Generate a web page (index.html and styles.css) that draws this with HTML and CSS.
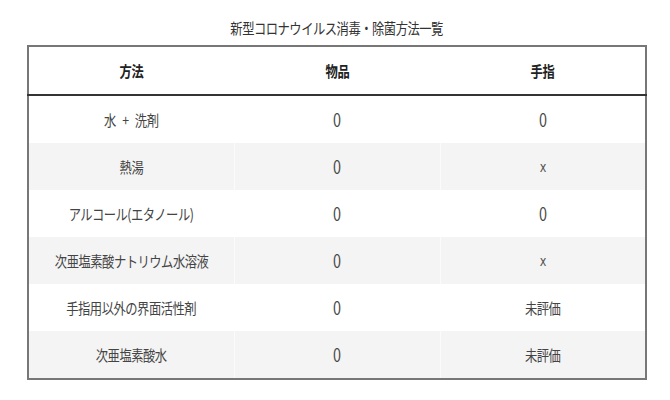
FILE: index.html
```html
<!DOCTYPE html>
<html lang="ja">
<head>
<meta charset="utf-8">
<link rel="stylesheet" href="styles.css">
</head>
<body>
<div class="page">
  <div class="caption"><span class="sq">新型コロナウイルス消毒・除菌方法一覧</span></div>
  <table class="tbl">
    <thead>
      <tr><th><span class="sq">方法</span></th><th><span class="sq">物品</span></th><th><span class="sq">手指</span></th></tr>
    </thead>
    <tbody>
      <tr><td><span class="sq wide">水 + 洗剤</span></td><td><span class="sym">0</span></td><td><span class="sym">0</span></td></tr>
      <tr><td><span class="sq">熱湯</span></td><td><span class="sym">0</span></td><td><span class="symx">x</span></td></tr>
      <tr><td><span class="sq">アルコール(エタノール)</span></td><td><span class="sym">0</span></td><td><span class="sym">0</span></td></tr>
      <tr><td><span class="sq">次亜塩素酸ナトリウム水溶液</span></td><td><span class="sym">0</span></td><td><span class="symx">x</span></td></tr>
      <tr><td><span class="sq">手指用以外の界面活性剤</span></td><td><span class="sym">0</span></td><td><span class="sq">未評価</span></td></tr>
      <tr><td><span class="sq">次亜塩素酸水</span></td><td><span class="sym">0</span></td><td><span class="sq">未評価</span></td></tr>
    </tbody>
  </table>
</div>
</body>
</html>
```
FILE: styles.css
```css
html, body {
  margin: 0;
  padding: 0;
  background: #fff;
}
.page {
  padding: 17px 0 0 27px;
  width: 620px;
  font-family: "Noto Sans CJK JP", "Noto Sans", sans-serif;
  color: #444;
}
.sq {
  display: inline-block;
  transform: scaleX(0.82);
  letter-spacing: -0.6px;
  white-space: pre;
}
.wide {
  word-spacing: 5px;
}
.sym {
  display: inline-block;
  font-family: "Noto Sans CJK JP", "Noto Sans", sans-serif;
  font-size: 18px;
  transform: scaleX(0.8);
  color: #4a4a4a;
}
.symx {
  display: inline-block;
  font-family: "DejaVu Sans", sans-serif;
  font-size: 14px;
  transform: scaleX(0.8);
  color: #555;
}
.caption {
  text-align: center;
  font-size: 15px;
  line-height: 22px;
  height: 28px;
  color: #333;
}
.tbl {
  width: 620px;
  border-collapse: collapse;
  border: 2px solid #777;
  table-layout: fixed;
}
.tbl th, .tbl td {
  text-align: center;
  font-size: 15px;
  padding: 0;
  line-height: 20px;
}
.tbl th {
  height: 47px;
  font-weight: bold;
  color: #222;
  border-bottom: 2px solid #333;
}
.tbl td {
  height: 47px;
  color: #444;
}
.tbl td + td {
  border-left: 1px solid #fff;
}
.tbl tbody tr:nth-child(even) td {
  background: #f4f4f4;
}
.tbl tbody tr:nth-child(even) td + td {
  border-left-color: #fbfbfb;
}
```
